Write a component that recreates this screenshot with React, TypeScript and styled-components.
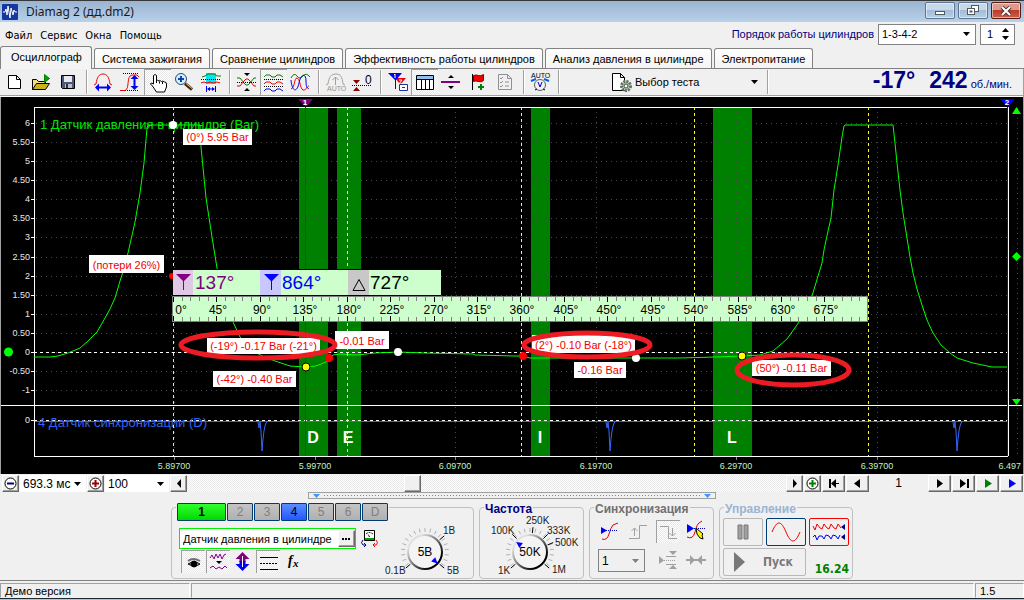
import React, { useState } from "react";
import styled, { createGlobalStyle, css } from "styled-components";

const sans = `"Liberation Sans", Arial, sans-serif`;
const humanist = `"DejaVu Sans Condensed", "DejaVu Sans", Tahoma, sans-serif`;
const hatch = `repeating-conic-gradient(#e8e8e8 0 25%, #ffffff 0 50%) 0 0 / 2px 2px`;

const GlobalStyle = createGlobalStyle`
  * { box-sizing: border-box; }
  body { margin: 0; background: #f0f0f0; font: 11px/14px ${sans}; color: #000; }
  button, input, select { font: inherit; color: inherit; }
`;

/* ---------- window frame ---------- */

const Window = styled.div`
  display: flex;
  flex-direction: column;
  min-height: 100vh;
  background: #f0f0f0;
`;

const TitleBar = styled.header`
  display: flex;
  align-items: center;
  height: 22px;
  padding: 0 3px 0 2px;
  border-top: 1px solid #383838;
  background: linear-gradient(#99b4d1, #b9d1ea);
`;

const Title = styled.h1`
  flex: 1;
  margin: 0 0 0 8px;
  font: 12px/18px "Noto Sans", "Open Sans", sans-serif;
  color: #1a1a1a;
`;

const WindowButtons = styled.div`
  display: flex;
  gap: 3px;
  align-self: flex-start;
  padding-top: 1px;
`;

const WindowButton = styled.button<{ $close?: boolean }>`
  display: grid;
  place-items: center;
  width: 30px;
  height: 17px;
  padding: 0;
  border: 1px solid ${(p) => (p.$close ? "#5a1a14" : "#5b7593")};
  border-radius: 2px;
  box-shadow: inset 0 0 0 1px rgba(255, 255, 255, 0.5);
  background: ${(p) =>
    p.$close
      ? "linear-gradient(#dc9a8c 0 45%, #bc3c28 50%, #c8604c)"
      : "linear-gradient(#c6d8ea 0 45%, #a4bcd6 50%, #b8cfe6)"};
`;

const MenuRow = styled.div`
  display: flex;
  align-items: center;
  justify-content: space-between;
  height: 24px;
  padding: 0 9px 0 0;
`;

const Menu = styled.nav`
  display: flex;
  padding-left: 1px;
  font-family: ${humanist};
`;

const MenuItem = styled.button`
  padding: 3px 4px 0 4px;
  border: 0;
  background: none;
`;

const OrderForm = styled.div`
  display: flex;
  align-items: center;
  gap: 4px;
  color: #000080;
`;

const SelectBox = styled.span<{ $width?: number; $bordered?: boolean; $muted?: boolean }>`
  display: flex;
  align-items: center;
  position: relative;
  width: ${(p) => (p.$width ? `${p.$width}px` : "auto")};
  height: 21px;
  color: #000;
  background: ${(p) => (p.$muted ? "#f0f0f0" : "#fff")};
  border: ${(p) => (p.$bordered ? "1px solid #828282" : "0")};
  svg { position: absolute; right: 5px; top: 50%; margin-top: -2px; pointer-events: none; }
`;

const Select = styled.select`
  appearance: none;
  width: 100%;
  height: 100%;
  padding: 0 14px 0 3px;
  border: 0;
  background: transparent;
`;

const Spinner = styled.span`
  display: flex;
  align-items: center;
  width: 35px;
  height: 21px;
  padding-right: 5px;
  border: 1px solid #828282;
  background: #fff;
  color: #000;
`;

const SpinInput = styled.input`
  flex: 1;
  min-width: 0;
  padding: 0 0 0 6px;
  border: 0;
  background: none;
  appearance: textfield;
  &::-webkit-inner-spin-button { display: none; }
`;

const SpinArrows = styled.span`
  display: flex;
  flex-direction: column;
  gap: 4px;
`;

const BareButton = styled.button`
  display: block;
  padding: 0;
  border: 0;
  background: none;
  line-height: 0;
`;

/* ---------- tabs ---------- */

const Tabs = styled.div`
  display: flex;
  align-items: flex-end;
  gap: 2px;
  height: 23px;
  border-bottom: 1px solid #828282;
`;

const Tab = styled.button<{ $active?: boolean }>`
  height: 20px;
  padding: 0 7px;
  border: 1px solid #828282;
  border-bottom: 0;
  border-radius: 3px 3px 0 0;
  background: linear-gradient(#fff, #f4f4f4);
  white-space: nowrap;
  ${(p) =>
    p.$active &&
    css`
      height: 23px;
      margin-bottom: -1px;
      padding: 0 9px 2px 10px;
      background: #f4f4f4;
    `}
`;

/* ---------- toolbar ---------- */

const Toolbar = styled.div`
  display: flex;
  align-items: center;
  height: 28px;
  padding: 0 11px 2px 1px;
  border-left: 0;
  border-right: 1px solid #a0a0a0;
  box-shadow: inset 0 -1px #fff, inset 0 -2px #a0a0a0;
`;

const Tool = styled.button<{ $pressed?: boolean }>`
  width: 27px;
  height: 26px;
  padding: 0;
  border: 0;
  line-height: 0;
  background: ${(p) => (p.$pressed ? hatch : "none")};
  box-shadow: ${(p) => (p.$pressed ? "inset 1px 1px #a0a0a0" : "none")};
`;

const Separator = styled.span`
  width: 8px;
  height: 24px;
  background: linear-gradient(90deg, transparent 4px, #a0a0a0 4px 5px, #fff 5px 6px, transparent 6px);
`;

const TestPicker = styled.label`
  display: flex;
  align-items: center;
  width: 155px;
  margin-left: 46px;
  ${SelectBox} { flex: 1; background: none; }
  ${Select} { padding-left: 0; }
`;

const Readout = styled.output`
  display: flex;
  flex: 1;
  align-items: baseline;
  justify-content: flex-end;
  gap: 3px;
  color: #000080;
  line-height: 26px;
`;

const Big = styled.b`
  margin-left: 11px;
  font-size: 23px;
`;

/* ---------- scope ---------- */

const Scope = styled.main`
  border: solid #a0a0a0;
  border-width: 0 1px;
  background: #000;
  padding-right: 1px;
  svg { display: block; width: 100%; height: auto; }
`;

const NavRow = styled.div`
  display: flex;
  gap: 1px;
  height: 18px;
  padding: 1px 1px 0 2px;
`;

const Flat3d = styled.button<{ $width?: number }>`
  display: grid;
  place-items: center;
  flex: none;
  width: ${(p) => p.$width ?? 17}px;
  height: 17px;
  padding: 0;
  border: 1px solid;
  border-color: #fff #696969 #696969 #fff;
  box-shadow: inset -1px -1px #a0a0a0;
  background: #f0f0f0;
`;

const Track = styled.div`
  flex: 1;
  display: flex;
  min-width: 0;
  padding-left: 21.2%;
  background: ${hatch};
`;

const NavSelect = styled(SelectBox)`
  height: 17px;
  font-size: 12px;
`;

const Frame = styled.output`
  width: 57px;
  font-size: 12px;
  line-height: 17px;
  text-align: center;
`;

const Splitter = styled.button`
  display: flex;
  align-items: center;
  align-self: center;
  justify-content: space-between;
  gap: 4px;
  width: 408px;
  height: 7px;
  padding: 0 4px;
  border: 1px solid #a0a0a0;
  background: #f0f0f0;
`;

const SplitterDots = styled.span`
  flex: 1;
  height: 1px;
  background: repeating-linear-gradient(90deg, #3c96ff 0 1px, transparent 1px 3px);
`;

/* ---------- control groups ---------- */

const Groups = styled.div`
  display: flex;
  justify-content: center;
  gap: 5px;
  padding: 4px 0 1px;
`;

const Group = styled.fieldset<{ $width: number }>`
  flex: none;
  width: ${(p) => p.$width}px;
  height: 76px;
  min-width: 0;
  margin: 0;
  padding: 0;
  border: 1px solid #c0c0c0;
  border-radius: 4px;
`;

const Legend = styled.legend<{ $color?: string }>`
  height: 9px;
  margin-left: 4px;
  padding: 0 1px;
  font: bold 12px/13px ${sans};
  color: ${(p) => p.$color ?? "#000"};
`;

const Channels = styled.span`
  display: flex;
  gap: 1px;
`;

const channelFill = {
  on: css`background: linear-gradient(#30ff30, #00d800); color: #000; font-weight: bold;`,
  sync: css`background: linear-gradient(#5c8cff, #2458ff); color: #000;`,
  off: css`background: linear-gradient(#c4c4c4, #b0b0b0); color: #808080;`,
};

const Channel = styled.button<{ $kind: keyof typeof channelFill }>`
  width: ${(p) => (p.$kind === "on" ? 49 : 26)}px;
  height: 18px;
  padding: 0;
  border: 1px solid #003c74;
  border-radius: 1px;
  font: 12px/14px ${sans};
  ${(p) => channelFill[p.$kind]}
`;

const ChannelBody = styled.div`
  display: flex;
`;

const ChannelSettings = styled.div`
  display: flex;
  flex-direction: column;
  gap: 1px;
  width: 201px;
  padding: 16px 0 0 7px;
`;

const Line = styled.div`
  display: flex;
  align-items: center;
  gap: 4px;
`;

const SensorField = styled.span`
  display: flex;
  align-items: center;
  flex: none;
  width: 177px;
  height: 21px;
  border: 1px solid #00f000;
  background: #fff;
`;

const SensorInput = styled.input`
  flex: 1;
  min-width: 0;
  padding: 0 0 0 3px;
  border: 0;
  background: none;
`;

const Toggles = styled.div`
  display: flex;
  gap: 1px;
  padding-left: 2px;
`;

const Toggle = styled.button<{ $pressed?: boolean }>`
  width: 24px;
  height: 23px;
  padding: 0;
  border: 0;
  line-height: 0;
  background: ${(p) => (p.$pressed ? hatch : "none")};
  box-shadow: ${(p) => (p.$pressed ? "inset 1px 1px #a0a0a0" : "none")};
`;

const SyncGrid = styled.div`
  display: grid;
  grid-template-columns: repeat(4, 24px);
  gap: 6px 5px;
  padding: 8px 0 0 8px;
`;

const SyncSelect = styled(SelectBox)`
  grid-column: span 2;
  height: 23px;
  font-size: 12px;
  color: #000;
`;

const ControlGrid = styled.div`
  display: grid;
  grid-template-columns: repeat(3, 40px);
  gap: 2px 3px;
  padding: 6px 0 0 3px;
`;

const ControlButton = styled.button<{ $edge?: string; $wide?: boolean }>`
  display: flex;
  align-items: center;
  justify-content: ${(p) => (p.$wide ? "flex-start" : "center")};
  gap: 18px;
  grid-column: span ${(p) => (p.$wide ? 2 : 1)};
  height: 28px;
  padding: ${(p) => (p.$wide ? "0 0 0 10px" : "0")};
  border: 1px solid ${(p) => p.$edge ?? "#b8b8b8"};
  border-radius: 2px;
  background: #f0f0f0;
  font: bold 12px/14px ${humanist};
  color: #787878;
`;

const Voltage = styled.output`
  align-self: end;
  font: bold 12px/14px ${humanist};
  color: #008000;
  text-align: right;
`;

const StatusBar = styled.footer`
  display: flex;
  gap: 1px;
  height: 18px;
  border-top: 1px solid #828282;
  padding: 2px 0 0;
`;

const StatusCell = styled.span<{ $width?: number }>`
  flex: ${(p) => (p.$width ? "none" : 1)};
  width: ${(p) => p.$width}px;
  padding-left: 4px;
  border: 1px solid #a0a0a0;
  border-color: #a0a0a0 #fff #f0f0f0 #a0a0a0;
  line-height: 15px;
`;

const TaskStrip = styled.div`
  height: 2px;
  border-top: 1px solid #202830;
  background: #b0c4d8;
`;

/* ---------- small glyphs ---------- */

const Down = ({ fill = "#000" }: { fill?: string }) => (
  <svg width="7" height="4" viewBox="0 0 7 4" aria-hidden><path d="M0 0h7L3.500 4z" fill={fill} /></svg>
);
const Up = () => (
  <svg width="7" height="4" viewBox="0 0 7 4" aria-hidden><path d="M0 4h7L3.500 0z" /></svg>
);

const Zoom = ({ color, plus }: { color: string; plus?: boolean }) => (
  <svg width="13" height="13" viewBox="0 0 13 13" aria-hidden>
    <circle cx="6.500" cy="6.500" r="5.500" fill="#fff" stroke="#000" />
    <path d={plus ? "M3 6.500h7M6.500 3v7" : "M3 6.500h7"} stroke={color} strokeWidth="2" />
  </svg>
);

const Nav = ({ d, fill = "#000" }: { d: string; fill?: string }) => (
  <svg width="12" height="9" viewBox="0 0 12 9" aria-hidden><path d={d} fill={fill} /></svg>
);

const Icon = ({ children }: { children: React.ReactNode }) => (
  <svg width="27" height="26" viewBox="0 0 27 26" fill="none" stroke="#000" aria-hidden>{children}</svg>
);

const Small = ({ children }: { children: React.ReactNode }) => (
  <svg width="24" height="23" viewBox="0 0 24 23" fill="none" stroke="#000" aria-hidden>{children}</svg>
);

const BLUE = "#0000f0";
const RED = "#f00000";
const GREEN = "#008000";
const wave = (y: number) => `M4 ${y}l2-2h4l2 2h3l2-2h3l3 2`;

const icons = {
  fresh: <path d="M7.500 6.500h8l4 4v9h-12z M15.500 6.500v4h4" fill="#fff" />,
  open: (
    <>
      <path d="M4.500 20.500v-10h4l2 2h7v3" fill="#f0e080" />
      <path d="M4.500 20.500l4-6h13l-4 6z" fill="#c8b020" />
      <path d="M16.500 5.500v8l5-4z" fill="#00a000" stroke="#008000" />
    </>
  ),
  save: (
    <>
      <path d="M6.500 6.500h13v13h-12l-1-1z" fill="#505878" />
      <path d="M9 7h8v6H9z" fill="#e8e8f0" stroke="none" />
      <path d="M10 15h7v4h-7z" fill="#b8c0d0" stroke="none" />
      <path d="M11 15h2v4h-2z" fill="#303030" stroke="none" />
    </>
  ),
  period: (
    <>
      <path d="M4 16l2-1C7 8 9 5 13 5s6 3 7 10l2 1" stroke={RED} />
      <path d="M8 18.500h10" stroke={BLUE} strokeWidth="2" />
      <path d="M5 18.500l4-4v8zM21 18.500l-4-4v8z" fill={BLUE} stroke="none" />
    </>
  ),
  amplitude: (
    <>
      <path d="M6 4.500h16M6 21.500h15" strokeDasharray="1 1" />
      <path d="M3 21.500h5C13 20 9 7 15 6h5l2 2" stroke={RED} />
      <path d="M17.500 9v9" stroke={BLUE} strokeWidth="2" />
      <path d="M17.500 6l-4 4h8zM17.500 21l-4-4h8z" fill={BLUE} stroke="none" />
    </>
  ),
  hand: (
    <path
      d="M9.500 15V6.500q1.500-2 3 0V12q1-1.500 2.500 0 1-1 2.500.5 1.500-1 3 .5 2 0 2 2v3l-2 5h-8l-4-6-2-2q0-2 3 0z M12.500 12v2M15.500 12.500v2M18.500 13v2"
      fill="#fff"
    />
  ),
  magnify: (
    <>
      <path d="M14 14.500l7 6" stroke="#402000" strokeWidth="3" />
      <path d="M15 14.500l6 5" stroke="#f0d060" strokeWidth="1" />
      <circle cx="10" cy="10" r="5.500" fill="#d0f0ff" stroke="#304878" strokeWidth="1" />
      <path d="M7 10h6M10 7v6" stroke="#1040b0" strokeWidth="2" />
    </>
  ),
  fragment: (
    <>
      <path d="M8 4h10v11H8z" fill="#00e8f8" stroke="none" />
      <path d="M4 8l3-1 3-2h6l3 2 4 0" stroke={GREEN} />
      <path d="M3 10.500h20" strokeDasharray="1 1" />
      <path d="M3 14l3-1 3 1 3-1 3 1 4-1 3 1" stroke={RED} />
      <path d="M8.500 17v6M17.500 17v6M10 20h6" stroke={BLUE} />
      <path d="M9 20l3-2v4zM17 20l-3-2v4z" fill={BLUE} stroke="none" />
    </>
  ),
  squeeze: (
    <>
      <path d="M11 4h6l-3 3zM11 22h6l-3-3z" fill="#000" stroke="none" />
      <path d="M4 9h3l4 5 2 2h2l2-2 4-5h2" stroke={GREEN} />
      <path d="M4 17h3l4-5 2-2h2l2 2 4 5h2" stroke={RED} />
      <path d="M4 13.500h19" strokeDasharray="1 1" />
    </>
  ),
  stacked: (
    <>
      <path d={wave(8)} stroke={GREEN} />
      <path d={wave(15)} stroke={RED} />
      <path d={wave(22)} stroke={BLUE} />
      <path d="M4 10.500h19M4 17.500h19" strokeDasharray="1 1" />
    </>
  ),
  overlaid: (
    <>
      <path d="M4 9q3-6 6-2t6 0 7 1" stroke={GREEN} />
      <path d="M4 20c4-1 3-11 6-11s3 11 6 12 4-4 6-4" stroke={RED} />
      <path d="M4 11c1 12 6 13 8 3s7-10 7-2 2 7 3 8" stroke={BLUE} />
    </>
  ),
  autoScale: (
    <>
      <path d="M4 16l2-1C7 8 9 5 14 5s6 3 7 10l2 1" stroke="#a0a0a0" />
      <path d="M13.500 16V8M10.500 11l3-3 3 3" stroke="#a0a0a0" />
      <text x="5" y="22" fontSize="7" fontFamily={sans} fill="#909090" stroke="none">AUTO</text>
    </>
  ),
  zero: (
    <>
      <path d="M4 11h7l-3.500 4zM4 22h7l-3.500-4z" fill="#900000" stroke="none" />
      <path d="M3 16.500h19" strokeDasharray="1 1" />
      <text x="16" y="15" fontSize="12" fontFamily={sans} fill="#000" stroke="none">0</text>
    </>
  ),
  markers: (
    <>
      <path d="M11 9h11l-5 6v5h-1v-5z" fill={RED} stroke="none" />
      <path d="M4 4h14l-6 7v9h-1v-9z" fill={BLUE} stroke="none" />
      <path d="M10 6l1-1v4M15 11h3l-3 4h3" stroke="#fff" />
      <path d="M15.500 15.500h8v6h-8z" fill="#fff" stroke="#2030a0" />
      <path d="M18 18.500h3" stroke="#2030a0" />
    </>
  ),
  table: (
    <>
      <path d="M5.500 6.500h17v14h-17z" fill="#fff" />
      <path d="M6 7h16v3H6z" fill="#90c0f0" stroke="none" />
      <path d="M5 10.500h18M10.500 10v10M14.500 10v10M18.500 10v10" />
    </>
  ),
  level: (
    <>
      <path d="M3 13h19" stroke="#800080" strokeWidth="2" />
      <path d="M10 9h6l-3-3zM10 17h6l-3 3z" fill="#000" stroke="none" />
    </>
  ),
  flag: (
    <>
      <path d="M7.500 5v16" strokeWidth="1" />
      <path d="M8.500 6.500q3-1 5 0t5-1v6q-2 2-5 1t-5 0z" fill={RED} stroke="#800000" />
      <path d="M13 18h6M16 15v6" stroke={GREEN} strokeWidth="2" />
    </>
  ),
  checklist: (
    <>
      <path d="M6.500 5.500h9l4 4v11h-13z M15.500 5.500v4h4" stroke="#909090" />
      <path d="M8 9l1 1 2-2M8 13l1 1 2-2M8 17l1 1 2-2M13 13h4M13 17h4" stroke="#909090" />
    </>
  ),
  auto: (
    <>
      <text x="4" y="9" fontSize="7" fontFamily={sans} fill="#000" stroke="none">AUTO</text>
      <path d="M4 12l5-2M22 12l-5-2" stroke="#0060f0" strokeWidth="2" />
      <circle cx="13" cy="16" r="5.500" fill="#f0f0f0" stroke="#606060" />
      <path d="M11 13l2 5 2-5" stroke="#0000c0" />
      <path d="M8 21l2-1M18 21l-2-1" />
    </>
  ),
  test: (
    <>
      <path d="M4.500 4.500h8l4 4v13h-12z M12.500 4.500v4h4" fill="#fff" />
      <circle cx="18" cy="17" r="4.500" fill="#c0d0c0" stroke="#607060" strokeWidth="3" strokeDasharray="2 1" />
      <circle cx="18" cy="17" r="2" fill="#fff" stroke="#405040" />
    </>
  ),
};

type IconName = keyof typeof icons;
const toolGroups: { name: IconName; label: string; pressed?: boolean }[][] = [
  [
    { name: "fresh", label: "Новый" },
    { name: "open", label: "Открыть" },
    { name: "save", label: "Сохранить" },
  ],
  [
    { name: "period", label: "Период" },
    { name: "amplitude", label: "Амплитуда" },
    { name: "hand", label: "Перемещение", pressed: true },
    { name: "magnify", label: "Лупа" },
    { name: "fragment", label: "Фрагмент" },
  ],
  [
    { name: "squeeze", label: "Сжать" },
    { name: "stacked", label: "Раздельно", pressed: true },
    { name: "overlaid", label: "Вместе" },
  ],
  [
    { name: "autoScale", label: "Автомасштаб" },
    { name: "zero", label: "Ноль" },
  ],
  [
    { name: "markers", label: "Маркеры" },
    { name: "table", label: "Таблица", pressed: true },
    { name: "level", label: "Уровень" },
    { name: "flag", label: "Метка" },
    { name: "checklist", label: "Отчёт" },
  ],
  [{ name: "auto", label: "Автоматически" }],
];

/* ---------- chart ---------- */

const LEFT = 34;
const RIGHT = 1008;
const rows = [
  ["6", 123], ["5.50", 142], ["5", 161], ["4.50", 180], ["4", 199], ["3.50", 218], ["3", 237], ["2.50", 257],
  ["2", 276], ["1.50", 295], ["1", 314], ["0.50", 333], ["0", 352], ["-0.50", 371], ["-1", 390],
] as const;
const times = [
  ["5.89700", 174], ["5.99700", 315], ["6.09700", 455], ["6.19700", 596], ["6.29700", 736], ["6.39700", 877],
] as const;
const zones = [
  { x: 299, w: 29, letter: "D", at: 313 },
  { x: 337, w: 24, letter: "E", at: 348 },
  { x: 531, w: 19, letter: "I", at: 540 },
  { x: 713, w: 39, letter: "L", at: 732 },
];
const strokes = [173, 347, 521, 694, 868];
const pressure =
  "34,357 50,357 58,356 68,353 80,348 88,341 97,332 105,318 110,309 115,298 120,281 122,275 128,253 135,222 140,193 144,163 147,128 148,125 200,125 " +
  "201,147 206,198 212,237 217,268 225,302 233,322 240,337 252,350 262,356 275,361 290,366 305,367 316,366 326,362 333,355 340,354 357,355 375,353 398,352 " +
  "425,353 473,354 475,355 515,356 523,356 530,358 680,358 715,357 742,356 760,355 773,351 787,339 799,322 812,296 822,263 824,250 828,231 831,218 834,190 " +
  "838,165 842,137 844,126 845,125 893,125 895,143 897,163 900,190 903,213 907,238 910,257 913,273 917,289 922,305 927,320 933,333 941,345 950,353 957,358 973,363 992,367 1007,367";
const notes = [
  { x: 183, y: 129, w: 69, h: 16, text: "(0°) 5.95 Bar" },
  { x: 89, y: 255, w: 75, h: 18, text: "(потери 26%)" },
  { x: 207, y: 338, w: 113, h: 16, text: "(-19°) -0.17 Bar (-21°)" },
  { x: 213, y: 371, w: 83, h: 16, text: "(-42°) -0.40 Bar" },
  { x: 335, y: 331, w: 54, h: 18, text: "-0.01 Bar" },
  { x: 532, y: 335, w: 103, h: 18, text: "(2°) -0.10 Bar (-18°)" },
  { x: 574, y: 362, w: 52, h: 16, text: "-0.16 Bar" },
  { x: 752, y: 360, w: 79, h: 16, text: "(50°) -0.11 Bar" },
];
const dots = [
  [173, 125, "#fff"], [306, 367, "#ff0"], [329, 358, "#f00"], [398, 352, "#fff"],
  [523, 356, "#f00"], [636, 358, "#fff"], [742, 356, "#ff0"],
] as const;
const rings = [
  [258, 345, 77, 13], [587, 345, 63, 12], [793, 370, 56, 15],
] as const;

const Chart = () => (
  <svg viewBox="1 97 1021 377" fontFamily={sans} role="img" aria-label="Осциллограмма">
    <rect x="1" y="97" width="1021" height="377" />
    {zones.map((z) => (
      <rect key={z.letter} x={z.x} y="108" width={z.w} height="348" fill="#008000" />
    ))}
    <g stroke="#484848" strokeDasharray="1 4">
      {rows.map(([label, y]) => <path key={label} d={`M${LEFT + 2} ${y + 0.5}H${RIGHT}`} />)}
      {times.map(([label, x]) => <path key={label} d={`M${x + 0.5} 112V456`} />)}
      <path d="M1017.500 108V456" />
    </g>
    <g stroke="#fff">
      {rows.map(([label, y]) => <path key={label} d={`M${LEFT - 3} ${y + 0.5}h3`} />)}
      <path d="M31 420.500h3" />
      <path d={`M${LEFT} 352.500H${RIGHT}M${LEFT} 420.500H${RIGHT}`} strokeDasharray="3 3" />
      <path d={`M34.500 107V457M1 405.500H1022M34 456.500H1008M34 107.500H1008`} />
    </g>
    <g stroke="#808080">{times.map(([label, x]) => <path key={label} d={`M${x + 0.5} 457v3`} />)}</g>
    <text x="40" y="129" fontSize="13" fill="#00e800">1 Датчик давления в цилиндре (Bar)</text>
    <text x="38" y="427" fontSize="13" fill="#3060f0">4 Датчик синхронизации (D)</text>
    <path d="M35 421.500H1007" stroke="#3366ff" />
    {[262, 610, 957].map((x) => (
      <path key={x} d={`M${x - 4} 422l1 6 1-6 1 9 1 20 1-12 1-8 1-5 1-3 2-2`} fill="none" stroke="#3366ff" />
    ))}
    <polyline points={pressure} fill="none" stroke="#00ff00" />
    {strokes.map((x) => (
      <path key={x} d={`M${x + 0.5} 107V456`} stroke="#ffff00" strokeDasharray="3 3" />
    ))}
    <path d="M305.500 107V456" stroke="#602860" />
    <path d="M1007.500 107V456" stroke="#0000ff" />
    <path d="M1008.500 107V456" stroke="#fff" />
    <g fontSize="16" fontWeight="bold" fill="#fff" textAnchor="middle">
      {zones.map((z) => <text key={z.letter} x={z.at} y="443">{z.letter}</text>)}
    </g>
    <g fontSize="9" fill="#e8e8e8" textAnchor="end">
      {rows.map(([label, y]) => <text key={label} x="30" y={y + 3}>{label}</text>)}
      <text x="30" y="423">0</text>
    </g>
    <g fontSize="9" fill="#c0f0c0" textAnchor="middle">
      {times.map(([label, x]) => <text key={label} x={x} y="469">{label}</text>)}
      <text x="1021" y="469" textAnchor="end">6.497</text>
    </g>
    <path d="M298 99h15l-7 8z" fill="#800080" />
    <path d="M1000 99h15l-7 8z" fill="#0000ff" />
    <g fontSize="8" fontWeight="bold" fill="#fff" textAnchor="middle">
      <text x="305" y="105">1</text>
      <text x="1007" y="105">2</text>
    </g>
    <path d="M1012 114h9l-4.500-7zM1012 399h9l-4.500 6zM1016.500 252l4.500 4.500-4.500 4.500-4.500-4.500z" fill="#00ff00" />
    <circle cx="8.500" cy="352" r="4.500" fill="#00ff00" />
    <circle cx="172" cy="276" r="3" fill="#f00" />
    {dots.map(([x, y, fill]) => (
      <circle key={x} cx={x} cy={y} r="4" fill={fill} stroke="#000" strokeWidth={fill === "#ff0" ? 1 : 0} />
    ))}
    {notes.map((n) => (
      <g key={n.text}>
        <rect x={n.x} y={n.y} width={n.w} height={n.h} fill="#fff" />
        <text x={n.x + n.w / 2} y={n.y + n.h - 4} fontSize="11" fill="#f00000" textAnchor="middle">{n.text}</text>
      </g>
    ))}
    {rings.map(([x, y, rx, ry]) => (
      <ellipse key={x} cx={x} cy={y} rx={rx} ry={ry} fill="none" stroke="#ed1c24" strokeWidth="5" />
    ))}
    <rect x="173" y="269" width="268" height="27" />
    <rect x="173" y="270" width="268" height="25" fill="#ccffcc" />
    <rect x="173" y="270" width="20" height="25" fill="#e0c8e4" />
    <rect x="260" y="270" width="21" height="25" fill="#c8c8ff" />
    <rect x="348" y="270" width="21" height="25" fill="#c8c8c8" />
    <path d="M176 274h15l-7 7v9h-1v-9z" fill="#800080" />
    <path d="M264 274h15l-7 7v9h-1v-9z" fill="#0000ff" />
    <path d="M353 290.500h12l-6-11z" fill="none" stroke="#000" />
    <g fontSize="19">
      <text x="195" y="289" fill="#800080">137°</text>
      <text x="282" y="289" fill="#0000ff">864°</text>
      <text x="370" y="289">727°</text>
    </g>
    <rect x="172.500" y="296.500" width="695" height="25" fill="#ccffcc" stroke="#808080" />
    {Array.from({ length: 80 }, (_, i) => {
      const x = Math.round(173 + (i * 43.43) / 5) + 0.5;
      const long = i % 5 === 0;
      return (
        <path key={i} d={`M${x} 297v${long ? 5 : 4}M${x} 321v-${long ? 5 : 4}`} stroke={long ? "#000" : "#808080"} />
      );
    })}
    <g fontSize="12" textAnchor="middle">
      {Array.from({ length: 16 }, (_, i) => (
        <text key={i} x={i === 0 ? 181 : Math.round(175 + i * 43.43)} y="314">{i * 45}°</text>
      ))}
    </g>
  </svg>
);

/* ---------- dials ---------- */

const DialBox = styled.label`
  position: relative;
  display: block;
  line-height: 0;
`;

const DialInput = styled.input`
  position: absolute;
  inset: 0;
  width: 100%;
  height: 100%;
  margin: 0;
  opacity: 0;
`;

type Mark = { text: string; x: number; y: number; angle: number };

const Dial = (p: { name: string; width: number; cx: number; value: string; pointer: number; marks: Mark[] }) => {
  const cy = 40;
  const polar = (deg: number, r: number) => {
    const a = (deg * Math.PI) / 180;
    return `${(p.cx + r * Math.cos(a)).toFixed(1)} ${(cy + r * Math.sin(a)).toFixed(1)}`;
  };
  const a = (p.pointer * Math.PI) / 180;
  const px = p.cx + 13 * Math.cos(a);
  const py = cy + 13 * Math.sin(a);
  return (
    <DialBox>
      <svg width={p.width} height="66" viewBox={`0 0 ${p.width} 66`} fontFamily={sans} aria-hidden>
        <defs>
          <linearGradient id={`rim-${p.cx}`} x1="0" y1="0" x2="1" y2="1">
            <stop offset="0.200" stopColor="#e0e0e0" />
            <stop offset="0.800" stopColor="#000" />
          </linearGradient>
        </defs>
        {Array.from({ length: 19 }, (_, i) => 145 + i * 13.9).map((d) => (
          <path key={d} d={`M${polar(d, 20)}L${polar(d, 24)}`} stroke="#b0b0b0" />
        ))}
        {p.marks.map((m) => <path key={m.text} d={`M${polar(m.angle, 19)}L${polar(m.angle, 25)}`} stroke="#000" />)}
        <circle cx={p.cx} cy={cy} r="17" fill="#f4f4f4" stroke={`url(#rim-${p.cx})`} strokeWidth="2" />
        <path d="M4 0L-2-3V3z" fill="#0000ff" transform={`translate(${px} ${py}) rotate(${p.pointer})`} />
        <text x={p.cx} y={cy + 4} fontSize="12" textAnchor="middle">{p.value}</text>
        {p.marks.map((m) => <text key={m.text} x={m.x} y={m.y} fontSize="10" fill="#202020">{m.text}</text>)}
      </svg>
      <DialInput type="range" aria-label={p.name} />
    </DialBox>
  );
};

/* ---------- page ---------- */

const channels = [
  ["1", "on"], ["2", "off"], ["3", "off"], ["4", "sync"], ["5", "off"], ["6", "off"], ["D", "off"],
] as const;
const tabNames = [
  "Осциллограф", "Система зажигания", "Сравнение цилиндров", "Эффективность работы цилиндров",
  "Анализ давления в цилиндре", "Электропитание",
];

export default function App() {
  const [tab, setTab] = useState(0);
  return (
    <Window>
      <GlobalStyle />
      <TitleBar>
        <svg width="16" height="16" viewBox="0 0 16 16" aria-hidden>
          <rect width="16" height="16" rx="1" fill="#1438a0" />
          <path d="M1 8h2l1-3 1 6 1-9 2 12 1-10 2 7 1-5 1 2h2" fill="none" stroke="#fff" />
        </svg>
        <Title>Diamag 2 (дд.dm2)</Title>
        <WindowButtons>
          <WindowButton aria-label="Свернуть">
            <svg width="12" height="10" viewBox="0 0 12 10"><rect x="1.500" y="5.500" width="9" height="3" fill="#fff" stroke="#505860" /></svg>
          </WindowButton>
          <WindowButton aria-label="Восстановить">
            <svg width="12" height="11" viewBox="0 0 12 11" fill="#fff" stroke="#505860">
              <rect x="4.500" y=".5" width="7" height="6" /><rect x=".5" y="3.500" width="7" height="6" /><rect x="3" y="6" width="2" height="1" />
            </svg>
          </WindowButton>
          <WindowButton $close aria-label="Закрыть">
            <svg width="12" height="10" viewBox="0 0 12 10" fill="none">
              <path d="M2 1l8 8M10 1L2 9" stroke="#503030" strokeWidth="4" /><path d="M2 1l8 8M10 1L2 9" stroke="#fff" strokeWidth="2" />
            </svg>
          </WindowButton>
        </WindowButtons>
      </TitleBar>

      <MenuRow>
        <Menu>
          {["Файл", "Сервис", "Окна", "Помощь"].map((m) => <MenuItem key={m}>{m}</MenuItem>)}
        </Menu>
        <OrderForm>
          <label htmlFor="order">Порядок работы цилиндров</label>
          <SelectBox $width={98} $bordered>
            <Select id="order"><option>1-3-4-2</option></Select>
            <Down />
          </SelectBox>
          <Spinner>
            <SpinInput type="number" defaultValue={1} aria-label="Цилиндр" />
            <SpinArrows>
              <BareButton aria-label="Больше"><Up /></BareButton>
              <BareButton aria-label="Меньше"><Down /></BareButton>
            </SpinArrows>
          </Spinner>
        </OrderForm>
      </MenuRow>

      <Tabs role="tablist">
        {tabNames.map((name, i) => (
          <Tab key={name} role="tab" aria-selected={i === tab} $active={i === tab} onClick={() => setTab(i)}>{name}</Tab>
        ))}
      </Tabs>

      <Toolbar>
        {toolGroups.map((group) => (
          <React.Fragment key={group[0].name}>
            {group.map((t) => (
              <Tool key={t.name} aria-label={t.label} $pressed={t.pressed}><Icon>{icons[t.name]}</Icon></Tool>
            ))}
            <Separator />
          </React.Fragment>
        ))}
        <TestPicker>
          <Icon>{icons.test}</Icon>
          <SelectBox>
            <Select aria-label="Тест"><option>Выбор теста</option></Select>
            <Down />
          </SelectBox>
        </TestPicker>
        <Separator />
        <Readout><Big>-17°</Big><Big>242</Big>об./мин.</Readout>
      </Toolbar>

      <Scope><Chart /></Scope>

      <NavRow>
        <Flat3d aria-label="Уменьшить время"><Zoom color="#000080" /></Flat3d>
        <NavSelect $width={66}>
          <Select aria-label="Развёртка"><option>693.3 мс</option></Select>
          <Down />
        </NavSelect>
        <Flat3d aria-label="Увеличить время"><Zoom color="#a00000" plus /></Flat3d>
        <NavSelect $width={64}>
          <Select aria-label="Масштаб"><option>100</option></Select>
          <Down />
        </NavSelect>
        <Flat3d aria-label="Влево"><Nav d="M8 0v9L4 4.500z" /></Flat3d>
        <Track><Flat3d aria-label="Ползунок" /></Track>
        <Flat3d aria-label="Вправо"><Nav d="M4 0v9l4-4.500z" /></Flat3d>
        <Flat3d aria-label="Добавить"><Zoom color="#008000" plus /></Flat3d>
        <Flat3d $width={23} aria-label="В начало"><Nav d="M1 0h2v9H1zM8 0v9L3 4.500zM8 4h3v1H8z" /></Flat3d>
        <Flat3d $width={23} aria-label="Назад"><Nav d="M8 0v9L2 4.500z" /></Flat3d>
        <Frame>1</Frame>
        <Flat3d $width={23} aria-label="Вперёд"><Nav d="M3 0v9l6-4.500z" /></Flat3d>
        <Flat3d $width={23} aria-label="В конец"><Nav d="M2 0v9l6-4.500zM9 0h2v9H9z" /></Flat3d>
        <Flat3d $width={23} aria-label="Воспроизвести"><Nav d="M3 0v9l7-4.500z" fill="#008000" /></Flat3d>
        <Flat3d $width={23} aria-label="Следующий"><Nav d="M3 0v9l7-4.500z" fill="#0000ff" /></Flat3d>
      </NavRow>

      <Splitter aria-label="Свернуть панель"><Down fill="#3c96ff" /><SplitterDots /><Down fill="#3c96ff" /></Splitter>

      <Groups>
        <Group $width={303}>
          <Legend>
            <Channels>
              {channels.map(([name, kind]) => <Channel key={name} $kind={kind}>{name}</Channel>)}
            </Channels>
          </Legend>
          <ChannelBody>
            <ChannelSettings>
              <Line>
                <SensorField>
                  <SensorInput aria-label="Датчик" defaultValue="Датчик давления в цилиндре" />
                  <Flat3d aria-label="Выбрать датчик">
                    <svg width="9" height="2" viewBox="0 0 9 2"><path d="M0 0h2v2H0zM3 0h2v2H3zM6 0h2v2H6z" /></svg>
                  </Flat3d>
                </SensorField>
                <BareButton aria-label="Калибровка">
                  <svg width="19" height="19" viewBox="0 0 19 19" fill="none" stroke="#000">
                    <path d="M4.500 1.500h10v10h-10z" fill="#fff" />
                    <path d="M5 9h9v2H5z" fill="#00a000" stroke="none" />
                    <path d="M6 5q3-3 7 0M9.500 8L8 5" strokeDasharray="2 1" />
                    <path d="M3 11q-3 3 0 5h3M4 14l2 2-2 2" stroke="#000080" />
                    <path d="M16 11q3 3 0 5h-3M15 14l-2 2 2 2" stroke="#f00" />
                  </svg>
                </BareButton>
              </Line>
              <Toggles>
                <Toggle $pressed aria-label="Видимость">
                  <Small>
                    <path d="M7 11q5-4 12 0" stroke="#707070" strokeWidth="2" />
                    <path d="M7 14q6-4 12 0-5 4-12 0z" fill="#c8c8c8" />
                    <circle cx="13" cy="14" r="3" fill="#000" />
                  </Small>
                </Toggle>
                <Toggle $pressed aria-label="Фильтр">
                  <Small>
                    <path d="M4 8l2-3 2 4 2-5 2 4 2-4 2 5 2-4 2-1" stroke="#800080" />
                    <path d="M10 11h6l-3 3z" fill="#000" stroke="none" />
                    <path d="M4 18l3-2 3 3 3-2 3 2 3-3 2 2" stroke="#800080" />
                  </Small>
                </Toggle>
                <Toggle aria-label="Инверсия">
                  <Small>
                    <path d="M11.500 2l7 7h-4v3h-6V9h-4z" fill="#800080" stroke="none" />
                    <path d="M11.500 21l7-7h-4v-3h-6v3h-4z" fill="#0000f0" stroke="none" />
                    <path d="M11.500 6v11" stroke="#fff" />
                  </Small>
                </Toggle>
                <Toggle $pressed aria-label="Линии">
                  <Small>
                    <path d="M4 7.500h18M4 19.500h18" /><path d="M4 13.500h18" strokeDasharray="2 1" />
                  </Small>
                </Toggle>
                <Toggle aria-label="Функция">
                  <Small>
                    <text x="7" y="15" fontSize="14" fontStyle="italic" fontWeight="bold" fontFamily="Liberation Serif, serif" fill="#000" stroke="none">f</text>
                    <text x="12" y="17" fontSize="11" fontStyle="italic" fontWeight="bold" fontFamily="Liberation Serif, serif" fill="#000" stroke="none">x</text>
                  </Small>
                </Toggle>
              </Toggles>
            </ChannelSettings>
            <Dial
              name="Диапазон" width={96} cx={52} value="5В" pointer={42}
              marks={[
                { text: "0.1В", x: 12, y: 62, angle: 140 },
                { text: "1В", x: 70, y: 22, angle: -40 },
                { text: "5В", x: 74, y: 62, angle: 40 },
              ]}
            />
          </ChannelBody>
        </Group>

        <Group $width={105}>
          <Legend $color="#000080">Частота</Legend>
          <Dial
            name="Частота" width={102} cx={50} value="50K" pointer={216}
            marks={[
              { text: "1K", x: 18, y: 62, angle: 140 },
              { text: "100K", x: 11, y: 22, angle: 225 },
              { text: "250K", x: 46, y: 12, angle: 277 },
              { text: "333K", x: 67, y: 22, angle: 315 },
              { text: "500K", x: 75, y: 34, angle: 338 },
              { text: "1M", x: 72, y: 61, angle: 40 },
            ]}
          />
        </Group>

        <Group $width={125}>
          <Legend $color="#707070">Синхронизация</Legend>
          <SyncGrid>
            <Toggle aria-label="Уровень">
              <Small>
                <path d="M4 19q5 2 7-5t4-9l5-2" stroke="#e00000" strokeWidth="1" />
                <path d="M4 10.500h16" stroke="#0000c0" strokeDasharray="1 1" /><path d="M3 7l6 3.500L3 14z" fill="#0000ff" stroke="none" />
              </Small>
            </Toggle>
            <Toggle aria-label="По фронту">
              <Small><path d="M2 18.500h10.500v-13H20M7.500 16V8M4.500 11l3-3 3 3" stroke="#a0a0a0" /></Small>
            </Toggle>
            <Toggle $pressed aria-label="По спаду">
              <Small><path d="M4 6.500h8.500v12H21M16.500 8v8M13.500 13l3 3 3-3" stroke="#a0a0a0" /></Small>
            </Toggle>
            <Toggle aria-label="Автоуровень">
              <Small>
                <path d="M2 17q6 3 8-5t4-9l3-2" stroke="#e00000" />
                <path d="M3 8.500h18" stroke="#0000c0" strokeDasharray="1 1" /><path d="M2 4l7 4.500L2 13z" fill="#0000ff" stroke="none" />
                <path d="M11 8l7 6-1 1 1 4-3-1-3-4z" fill="#ff0" />
              </Small>
            </Toggle>
            <SyncSelect $width={47} $bordered $muted>
              <Select aria-label="Канал синхронизации"><option>1</option></Select>
              <Down fill="#808080" />
            </SyncSelect>
            <Toggle aria-label="Сжать по уровню">
              <Small>
                <path d="M10 7.500h10M10 15.500h10" stroke="#a0a0a0" /><path d="M4 11.500h16" stroke="#a0a0a0" strokeDasharray="1 1" />
                <path d="M13 2h8l-4 4zM13 20h8l-4-4zM3 7l5 4.500L3 15z" fill="#a0a0a0" stroke="none" />
              </Small>
            </Toggle>
            <Toggle aria-label="Сжать по времени">
              <Small>
                <path d="M1 11h20" stroke="#a0a0a0" strokeWidth="2" /><path d="M5 6l5 5-5 5zM17 6l-5 5 5 5z" fill="#a0a0a0" stroke="none" />
              </Small>
            </Toggle>
          </SyncGrid>
        </Group>

        <Group $width={134}>
          <Legend $color="#9ab4d4">Управление</Legend>
          <ControlGrid>
            <ControlButton aria-label="Пауза">
              <svg width="12" height="16" viewBox="0 0 12 16"><path d="M1 1h4v14H1zM7 1h4v14H7z" fill="#a0a0a0" stroke="#787878" /></svg>
            </ControlButton>
            <ControlButton $edge="#003c74" aria-label="Сигнал">
              <svg width="30" height="20" viewBox="0 0 30 20"><path d="M1 10C6-2 10-2 15 10s9 12 14 0" fill="none" stroke="#f00000" /></svg>
            </ControlButton>
            <ControlButton $edge="#ff0000" aria-label="Запись">
              <svg width="34" height="20" viewBox="0 0 34 20" fill="none">
                <path d="M1 4l2 4 2-6 3 4 2 1 2-5 3 4 2 1 2-5 3 4 2 1 2-5 3 4" stroke="#f00000" />
                <path d="M1 15l2-2 2 5 2-4 3 0 2 3 2-4 3 1 2 3 2-4 3 1 2 3 2-4" stroke="#0000f0" />
                <path d="M33 2v6l-4-3zM33 12v6l-4-3z" fill="#000080" />
              </svg>
            </ControlButton>
            <ControlButton $wide>
              <svg width="11" height="20" viewBox="0 0 11 20" aria-hidden><path d="M0 0l11 10L0 20z" fill="#787878" /></svg>
              Пуск
            </ControlButton>
            <Voltage>16.24</Voltage>
          </ControlGrid>
        </Group>
      </Groups>

      <StatusBar>
        <StatusCell $width={190}>Демо версия</StatusCell>
        <StatusCell />
        <StatusCell $width={49}>1.5</StatusCell>
      </StatusBar>
      <TaskStrip />
    </Window>
  );
}
